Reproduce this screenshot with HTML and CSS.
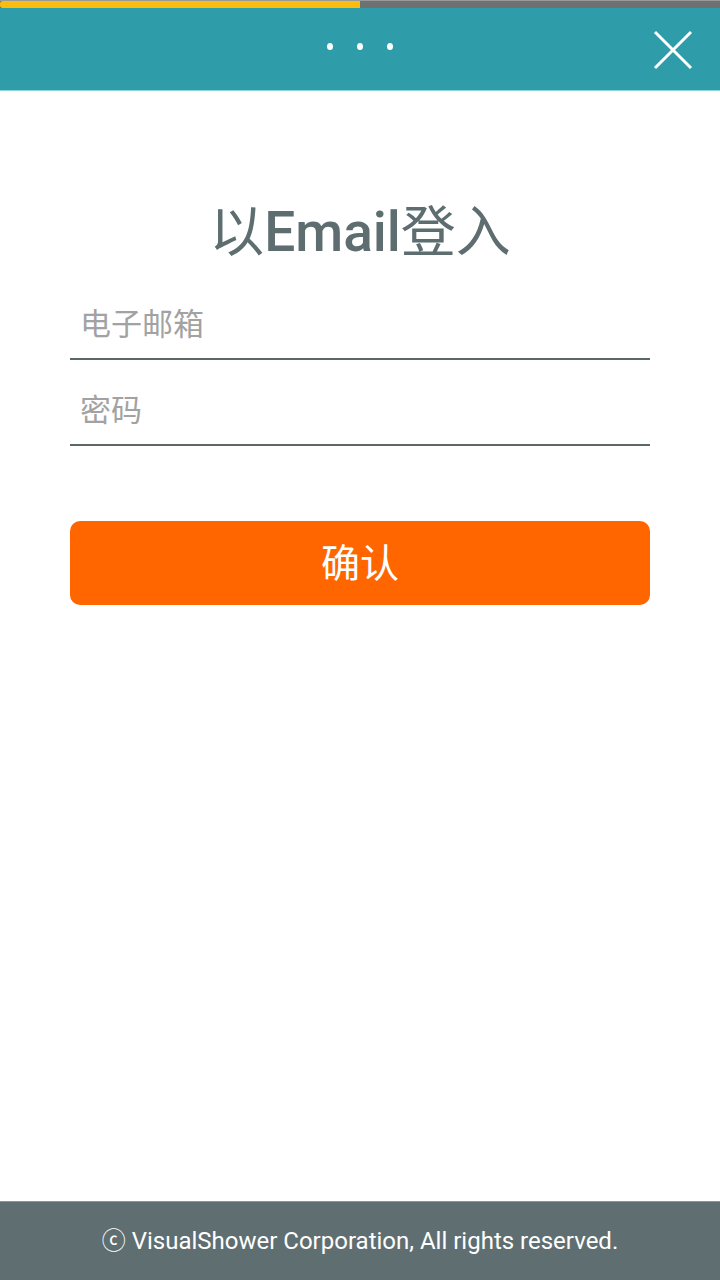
FILE: index.html
```html
<!DOCTYPE html>
<html lang="zh">
<head>
<meta charset="utf-8">
<title>以Email登入</title>
<link rel="stylesheet" href="styles.css">
</head>
<body>
<div class="page">
  <div class="progress"><div class="progress-fill" style="width:50%"></div></div>
  <header class="topbar">
    <div class="dots"><span></span><span></span><span></span></div>
    <button class="close" aria-label="close">
      <svg viewBox="0 0 40 40" width="40" height="40"><path d="M2 2 L38 38 M38 2 L2 38" stroke="#fff" stroke-width="3" fill="none"/></svg>
    </button>
  </header>
  <main class="content">
    <h1 class="title">以<span class="latin">Email</span>登入</h1>
    <form class="form">
      <input class="field" type="email" placeholder="电子邮箱">
      <input class="field" type="password" placeholder="密码">
      <button type="button" class="submit">确认</button>
    </form>
  </main>
  <footer class="footer">ⓒ VisualShower Corporation, All rights reserved.</footer>
</div>
</body>
</html>
```
FILE: styles.css
```css
html, body {
  margin: 0;
  padding: 0;
  background: #fff;
}
body {
  font-family: Roboto, "Noto Sans CJK SC", sans-serif;
}
.page {
  width: 720px;
  height: 1280px;
  display: flex;
  flex-direction: column;
}
.progress {
  height: 8px;
  background: #6e7172;
  border-top: 1px solid #9a9a9a;
  box-sizing: border-box;
}
.progress-fill {
  height: 100%;
  background: #fbbd0d;
  border-radius: 3px 0 0 3px;
}
.topbar {
  height: 83px;
  background: #2f9caa;
  border-bottom: 1px solid #8fd3de;
  box-sizing: border-box;
  position: relative;
  display: flex;
  align-items: center;
  justify-content: center;
}
.dots {
  display: flex;
  gap: 24px;
  margin-top: -6px;
}
.dots span {
  width: 6px;
  height: 7px;
  border-radius: 50%;
  background: #fff;
}
.close {
  position: absolute;
  right: 27px;
  top: 22px;
  width: 40px;
  height: 40px;
  padding: 0;
  border: 0;
  background: none;
}
.close svg {
  display: block;
}
.content {
  flex: 1;
  padding-top: 110px;
}
.title {
  margin: 0;
  text-align: center;
  font-size: 55px;
  line-height: 62px;
  font-weight: 400;
  color: #5d6d70;
}
.title .latin {
  font-weight: 500;
}
.form {
  margin: 25px 70px 0;
  display: flex;
  flex-direction: column;
}
.field {
  height: 72px;
  box-sizing: border-box;
  border: 0;
  border-bottom: 2px solid #5c6868;
  padding: 0 0 4px 10px;
  font-family: "Noto Sans CJK SC", sans-serif;
  font-size: 31px;
  color: #555;
  background: transparent;
  outline: none;
}
.field + .field {
  margin-top: 14px;
}
.field::placeholder {
  color: #a2a2a2;
}
.submit {
  margin-top: 75px;
  height: 84px;
  border: 0;
  border-radius: 10px;
  background: #ff6600;
  color: #fff;
  font-family: "Noto Sans CJK SC", sans-serif;
  font-size: 39px;
  padding: 0 0 6px;
}
.footer {
  height: 79px;
  background: #5f6e71;
  border-top: 1px solid #8a9698;
  box-sizing: border-box;
  color: #fff;
  font-size: 24px;
  padding-bottom: 6px;
  display: flex;
  align-items: center;
  justify-content: center;
}
```
